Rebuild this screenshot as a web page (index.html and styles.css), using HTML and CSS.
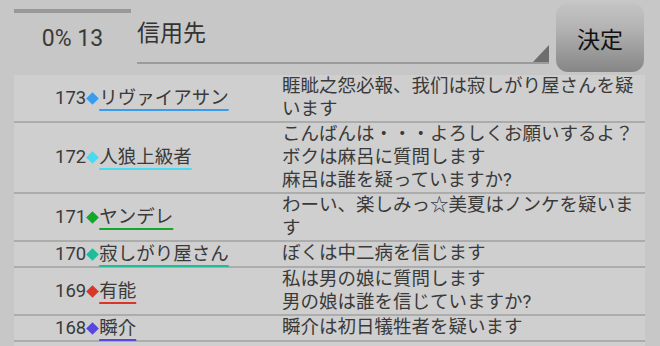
FILE: index.html
```html
<!DOCTYPE html>
<html>
<head>
	<title>投票</title>
	<meta charset="utf-8">
	<meta name="viewport" content="width=device-width, initial-scale=1">
	<link rel="stylesheet" href="styles.css">
</head>
<body>
	<div class="top">
		<div class="status">
			<div class="bar"></div>
			<div class="count">0% 13</div>
		</div>
		<div class="field">信用先</div>
		<button type="button" class="decide">決定</button>
	</div>
	<div class="log">
		<div class="row">
			<div class="who">173<i class="mark blue"></i><span class="name blue">リヴァイアサン</span></div>
			<div class="msg">睚眦之怨必報、我们は寂しがり屋さんを疑います</div>
		</div>
		<div class="row">
			<div class="who">172<i class="mark cyan"></i><span class="name cyan">人狼上級者</span></div>
			<div class="msg">こんばんは・・・よろしくお願いするよ？<br>ボクは麻呂に質問します<br>麻呂は誰を疑っていますか?</div>
		</div>
		<div class="row">
			<div class="who">171<i class="mark green"></i><span class="name green">ヤンデレ</span></div>
			<div class="msg">わーい、楽しみっ☆美夏はノンケを疑います</div>
		</div>
		<div class="row">
			<div class="who">170<i class="mark teal"></i><span class="name teal">寂しがり屋さん</span></div>
			<div class="msg">ぼくは中二病を信じます</div>
		</div>
		<div class="row">
			<div class="who">169<i class="mark red"></i><span class="name red">有能</span></div>
			<div class="msg">私は男の娘に質問します<br>男の娘は誰を信じていますか?</div>
		</div>
		<div class="row">
			<div class="who">168<i class="mark purple"></i><span class="name purple">瞬介</span></div>
			<div class="msg">瞬介は初日犠牲者を疑います</div>
		</div>
		<div class="row"></div>
	</div>
</body>
</html>
```

FILE: styles.css
```css
body {
	margin: 0;
	background: #c7c7c7;
	color: #3a3a3a;
	font-family: Roboto, "Noto Sans CJK JP", sans-serif;
	overflow: hidden;
}

.top {
	display: flex;
	align-items: flex-start;
	height: 75px;
}

.status {
	margin-left: 14px;
	width: 117px;
}

.bar {
	margin-top: 9px;
	height: 4px;
	background: #999;
}

.count {
	margin-top: 14px;
	text-align: center;
	font-size: 23px;
	line-height: 24px;
}

.field {
	position: relative;
	margin-left: 6px;
	width: 412px;
	height: 42px;
	padding-top: 20px;
	border-bottom: 2px solid #9b9b9b;
	font-size: 23px;
	line-height: 28px;
	color: #333;
}

.field::after {
	content: "";
	position: absolute;
	right: 0;
	bottom: 0;
	border-style: solid;
	border-width: 0 0 17px 16px;
	border-color: transparent transparent #6e6e6e transparent;
}

.decide {
	margin: 3px 0 0 7px;
	width: 88px;
	height: 69px;
	padding: 0;
	border: none;
	border-radius: 12px;
	background: linear-gradient(#c4c4c4, #b4b4b4 35%, #868686);
	color: #111;
	font-family: "Noto Sans CJK JP", sans-serif;
	font-size: 23px;
}

.log {
	margin: 0 15px 0 14px;
	background: #cfcfcf;
}

.row {
	display: flex;
	min-height: 24px;
	border-bottom: 2px solid #acacac;
	font-size: 18.5px;
	line-height: 23px;
}

.who {
	display: flex;
	align-items: center;
	width: 226px;
	padding-left: 41px;
}

.mark {
	display: inline-block;
	width: 9px;
	height: 9px;
	margin: 0 2px;
	transform: rotate(45deg);
}

.name {
	text-decoration: underline 2px;
	text-underline-offset: 5px;
}

.msg {
	flex: 1;
	padding-left: 1px;
}

.blue { background: #3a9cec; text-decoration-color: #3a9cec; }
.cyan { background: #45dcf2; text-decoration-color: #45dcf2; }
.green { background: #12a82a; text-decoration-color: #12a82a; }
.teal { background: #1fbc98; text-decoration-color: #1fbc98; }
.red { background: #d9362a; text-decoration-color: #d9362a; }
.purple { background: #5a45de; text-decoration-color: #5a45de; }

.name.blue, .name.cyan, .name.green, .name.teal, .name.red, .name.purple {
	background: none;
}
```
